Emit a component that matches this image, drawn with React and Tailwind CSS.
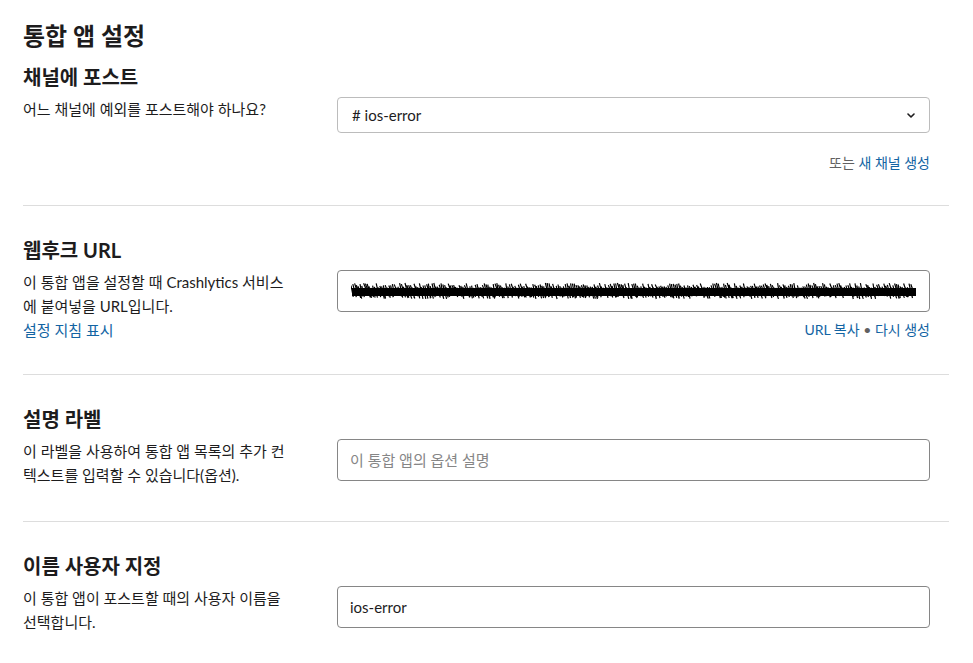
import React from "react";

// deterministic jitter for the redaction scribble
function scribblePath(width, height) {
  let seed = 7;
  const rnd = () => {
    seed = (seed * 9301 + 49297) % 233280;
    return seed / 233280;
  };
  let d = "";
  for (let x = 0; x < width; x += 1.8) {
    const top = 1 + rnd() * 5;
    const bottom = height - 1 - rnd() * 4;
    d += `M${x.toFixed(1)} ${top.toFixed(1)}L${(x + 2 + rnd() * 3).toFixed(1)} ${bottom.toFixed(1)}`;
  }
  return d;
}

function Redacted() {
  const w = 566;
  const h = 18;
  return (
    <svg width={w} height={h} viewBox={`0 0 ${w} ${h}`} className="block">
      <rect x="1" y="6" width={w - 2} height="8" fill="#000" />
      <path d={scribblePath(w - 6, h)} stroke="#000" strokeWidth="1.2" fill="none" />
    </svg>
  );
}

function Chevron() {
  return (
    <svg width="8" height="5" viewBox="0 0 8 5" fill="none">
      <path d="M1 1l3 3 3-3" stroke="#1d1c1d" strokeWidth="1.6" strokeLinecap="round" strokeLinejoin="round" />
    </svg>
  );
}

function Section({ title, children, desc, last, pb = "pb-8" }) {
  return (
    <div className={`pt-[30px] ${pb} ${last ? "" : "border-b border-[#dddddd]"}`}>
      <h2 className="text-[20px] leading-[28px] font-bold text-[#1d1c1d] mb-[6px]">{title}</h2>
      <div className="grid grid-cols-[272px_593px] gap-x-[42px] items-start">
        <div className="text-[15px] leading-[24px] text-[#1d1c1d]">{desc}</div>
        <div>{children}</div>
      </div>
    </div>
  );
}

export default function App() {
  return (
    <div
      className="bg-white min-h-screen pl-[23px] pr-[24px] pt-[20px]"
      style={{ fontFamily: 'Lato, "Noto Sans CJK KR", sans-serif' }}
    >
      <h1 className="text-[24px] leading-[32px] font-bold text-[#1d1c1d] mb-[11px]">통합 앱 설정</h1>

      {/* Post to channel */}
      <div className="pb-8 border-b border-[#dddddd]">
        <h2 className="text-[20px] leading-[28px] font-bold text-[#1d1c1d] mb-[6px]">채널에 포스트</h2>
        <div className="grid grid-cols-[272px_593px] gap-x-[42px] items-start">
          <div className="text-[15px] leading-[24px] text-[#1d1c1d]">어느 채널에 예외를 포스트해야 하나요?</div>
          <div>
            <div className="h-[36px] border border-[#bcbcbc] rounded-[4px] flex items-center justify-between pl-[14px] pr-[14px] text-[15px] text-[#1d1c1d]">
              <span># ios-error</span>
              <Chevron />
            </div>
            <div className="mt-[20px] text-right text-[14px] leading-[20px]">
              <span className="text-[#616061]">또는 </span>
              <span className="text-[#1264a3]">새 채널 생성</span>
            </div>
          </div>
        </div>
      </div>

      <Section
        title="웹후크 URL"
        desc={
          <>
            <p>이 통합 앱을 설정할 때 Crashlytics 서비스에 붙여넣을 URL입니다.</p>
            <p className="text-[#1264a3]">설정 지침 표시</p>
          </>
        }
      >
        <div className="h-[42px] border border-[#868686] rounded-[4px] flex items-center pl-[13px]">
          <Redacted />
        </div>
        <div className="mt-[8px] text-right text-[14px] leading-[20px]">
          <span className="text-[#1264a3]">URL 복사</span>
          <span className="text-[#616061]"> • </span>
          <span className="text-[#1264a3]">다시 생성</span>
        </div>
      </Section>

      <Section
        title="설명 라벨"
        pb="pb-[34px]"
        desc={<p>이 라벨을 사용하여 통합 앱 목록의 추가 컨텍스트를 입력할 수 있습니다(옵션).</p>}
      >
        <input
          placeholder="이 통합 앱의 옵션 설명"
          className="w-full h-[42px] border border-[#868686] rounded-[4px] px-[12px] text-[15px] text-[#1d1c1d] placeholder:text-[#868686] outline-none"
        />
      </Section>

      <Section
        title="이름 사용자 지정"
        last
        desc={<p>이 통합 앱이 포스트할 때의 사용자 이름을 선택합니다.</p>}
      >
        <input
          defaultValue="ios-error"
          className="w-full h-[42px] border border-[#868686] rounded-[4px] px-[12px] text-[15px] text-[#1d1c1d] outline-none"
        />
      </Section>
    </div>
  );
}
